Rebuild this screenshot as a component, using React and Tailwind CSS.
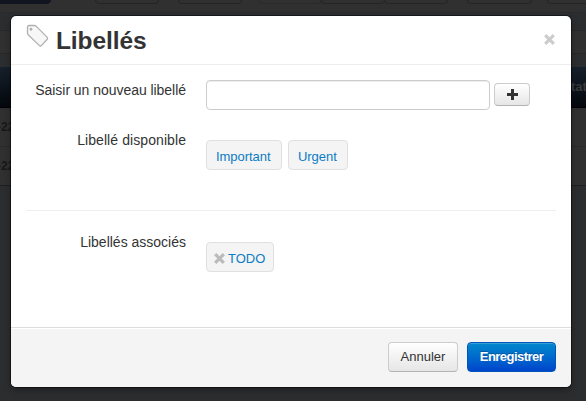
const toolbar = [
  'left-[-20px] w-[71px] bg-[#10151f] border-[#10151f]',
  'left-[95px] w-[64px] border-[#242424]',
  'left-[178px] w-[64px] border-[#242424]',
  'left-[258px] w-[64px] border-[#292929]',
  'left-[321px] w-[64px] border-[#242424]',
  'left-[384px] w-[64px] border-[#242424]',
  'left-[467px] w-[65px] border-[#242424]',
  'left-[547px] w-[60px] border-[#242424]',
];

function Backdrop() {
  return (
    <div className="flex h-[401px] flex-col bg-[#2c2d2f] text-[12px] font-bold text-[#16181a]">
      <div className="relative h-[13px] shrink-0 overflow-hidden border-b border-[#292b2d] bg-[#303030]">
        {toolbar.map((c) => (
          <span key={c} className={`absolute top-[-20px] h-[24px] rounded border ${c}`} />
        ))}
      </div>
      <div className="h-[18px] shrink-0 border-b border-[#272829]" />
      <div className="h-[23px] shrink-0 border-b border-[#272829] bg-[#303030]" />
      <div className="h-[13px] shrink-0" />
      <div className="flex h-[41px] shrink-0 items-center justify-end border-b border-black bg-linear-to-b from-[#16202b] to-[#05080e]">
        <span className="w-[15px] overflow-hidden whitespace-nowrap text-[13px] text-[#3a3a3a]">tat</span>
      </div>
      <div className="flex h-[39px] shrink-0 items-center border-b border-[#292929] bg-[#303030]"><span className="-ml-[3px]">-22</span></div>
      <div className="flex h-[39px] shrink-0 items-center border-b border-[#1f1f1f] bg-[#303030]"><span className="-ml-[3px]">-22</span></div>
    </div>
  );
}

function Cross({ className }) {
  return (
    <svg className={className} width="11" height="11" viewBox="0 0 11 11" fill="none" stroke="currentColor">
      <path d="M1.2 1.2 9.8 9.8M9.8 1.2 1.2 9.8" strokeWidth="3.2" />
    </svg>
  );
}

function Tag({ className, children }) {
  return (
    <button className={`mt-[10px] flex h-[30px] items-center rounded border border-[#e0e0e0] bg-[#f4f4f4] pt-[3px] pl-[9px] text-[13px] whitespace-nowrap text-[#0b7cc4] ${className}`}>
      {children}
    </button>
  );
}

function Row({ label, labelClass = '', className, children }) {
  return (
    <div className={`flex ${className}`}>
      <div className={`w-[160px] shrink-0 text-right ${labelClass}`}>{label}</div>
      <div className="ml-5 flex items-start">{children}</div>
    </div>
  );
}

export default function App() {
  return (
    <div className="relative h-[401px] w-[586px] overflow-hidden font-['Liberation_Sans',Arial,sans-serif] text-[14px] leading-5 text-[#333]">
      <Backdrop />
      <section className="absolute top-[16px] left-[11px] flex h-[371px] w-[560px] flex-col overflow-hidden rounded-[5px] bg-white shadow-[0_0_0_1px_rgba(0,0,0,0.45),0_3px_7px_rgba(0,0,0,0.35)]">
        <header className="flex h-[49px] shrink-0 border-b border-[#eee]">
          <svg className="mt-[8px] ml-[15px]" width="24" height="24" viewBox="0 0 24 24" fill="#f7f7f7" stroke="#b0b0b0" strokeWidth="1.3">
            <path d="M1.5 3.2Q1.5 1.5 3.2 1.5H8.2Q9.4 1.5 10.3 2.4L21 13.1Q22.2 14.3 21 15.5L15.6 21.4Q14.4 22.5 13.2 21.4L2.4 11Q1.5 10.2 1.5 9Z" />
            <circle cx="5" cy="5.2" r="0.8" fill="#b0b0b0" />
          </svg>
          <h1 className="ml-[6px] pt-[10px] text-[24.5px] leading-[30px] font-bold tracking-[-0.1px]">Libellés</h1>
          <button className="mt-[18px] mr-[16px] ml-auto h-[11px] text-[#ccc]"><Cross /></button>
        </header>
        <main className="h-[262px] shrink-0 px-[15px] pt-[15px]">
          <Row label="Saisir un nouveau libellé" labelClass="tracking-[-0.04px]" className="h-[50px]">
            <input className="h-[30px] w-[284px] rounded border border-[#ccc] shadow-[inset_0_1px_1px_rgba(0,0,0,0.075)]" />
            <button className="mt-[3px] ml-[4px] flex h-[23px] w-[36px] items-center justify-center rounded border border-[#ccc] border-b-[#b3b3b3] bg-linear-to-b from-white to-[#e6e6e6]">
              <svg className="-mt-px" width="11" height="11" viewBox="0 0 11 11"><path d="M4 0H7V4H11V7H7V11H4V7H0V4H4Z" fill="#333" /></svg>
            </button>
          </Row>
          <Row label="Libellé disponible" labelClass="tracking-[0.08px]" className="h-[80px]">
            <Tag className="mr-[6px] w-[76px] tracking-[-0.05px]">Important</Tag>
            <Tag className="w-[60px] tracking-[-0.05px]">Urgent</Tag>
          </Row>
          <hr className="mb-[21px] border-[#eee]" />
          <Row label="Libellés associés" className="h-[50px]">
            <Tag className="w-[68px]"><Cross className="mr-[3px] -ml-[2px] shrink-0 text-[#bbb]" />TODO</Tag>
          </Row>
        </main>
        <footer className="flex flex-1 justify-end gap-[9px] border-t border-[#ddd] bg-[#f4f4f4] px-[15px] pt-[14px] text-[13px] shadow-[inset_0_1px_0_#fff]">
          <button className="h-[30px] w-[70px] rounded border border-[#ccc] border-b-[#b3b3b3] bg-linear-to-b from-white to-[#e6e6e6] pb-px">Annuler</button>
          <button className="h-[30px] w-[89px] rounded border border-[#0055b8] bg-linear-to-b from-[#0088cc] to-[#0044cc] pb-px font-bold tracking-[-0.55px] text-white shadow-[inset_0_1px_0_rgba(255,255,255,0.2)] text-shadow-[0_-1px_0_rgba(0,0,0,0.25)]">Enregistrer</button>
        </footer>
      </section>
    </div>
  );
}
